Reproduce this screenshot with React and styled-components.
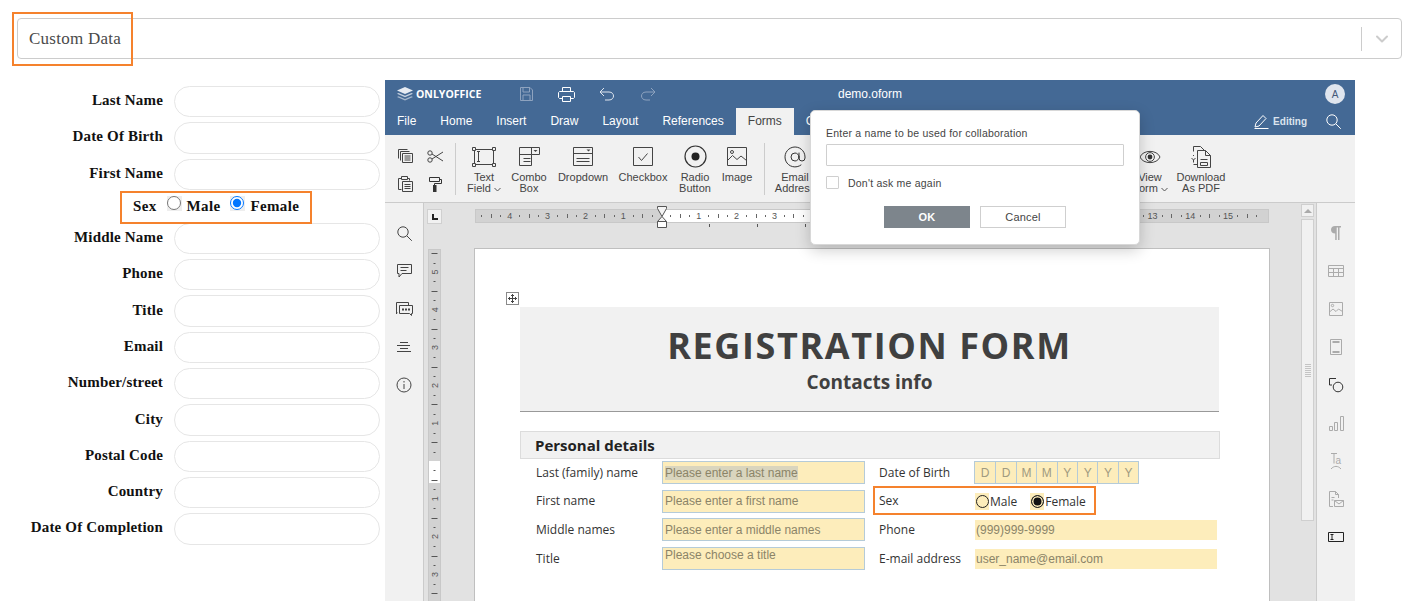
import React from "react";
import styled, { createGlobalStyle } from "styled-components";
import { ChevronDown, AtSign } from "lucide-react";

const GlobalStyle = createGlobalStyle`
  html, body { margin: 0; padding: 0; background: #fff; overflow: hidden; }
  * { box-sizing: border-box; }
`;

const Page = styled.div`
  position: relative;
  width: 1420px;
  height: 601px;
  overflow: hidden;
  padding: 18px 18px 0 17px;
  font-family: "Liberation Serif", serif;
`;

const Callout = styled.div`
  position: absolute;
  border: 2px solid #f5822d;
  pointer-events: none;
  left: ${(p) => p.$x}px;
  top: ${(p) => p.$y}px;
  width: ${(p) => p.$w}px;
  height: ${(p) => p.$h}px;
  z-index: 5;
`;

const SelectBar = styled.div`
  height: 41px;
  border: 1px solid #ccc;
  border-radius: 4px;
  display: flex;
  align-items: center;
  justify-content: space-between;
  padding: 0 9px 0 11px;
`;

const SelectValue = styled.span`
  position: relative;
  font-size: 17px;
  letter-spacing: 0.25px;
  color: #4a4a4a;
  &::before {
    content: "";
    position: absolute;
    left: 0;
    top: 0;
    width: 3px;
    height: 20px;
    background: #eee;
    z-index: -1;
  }
`;

const SelectArrow = styled.div`
  display: flex;
  align-items: center;
  height: 24px;
  padding-left: 10px;
  border-left: 1px solid #ccc;
  color: #ccc;
`;

const Main = styled.div`
  display: flex;
  margin-top: 21px;
`;

const FormColumn = styled.div`
  width: 363px;
  margin-right: 5px;
  padding-top: 6px;
  display: flex;
  flex-direction: column;
  gap: 5px;
`;

const FormRow = styled.div`
  display: flex;
  align-items: center;
  gap: 11px;
`;

const FieldLabel = styled.label`
  width: 146px;
  padding-bottom: 2px;
  text-align: right;
  font-size: 15px;
  font-weight: 700;
  letter-spacing: 0.17px;
  color: #111;
`;

const FieldInput = styled.input`
  width: 206px;
  height: 31.3px;
  border: 1px solid #e6e6e6;
  border-radius: 16px;
  background: #fff;
`;

const SexRow = styled.div`
  height: 23px;
  padding-left: 116px;
  display: flex;
  align-items: center;
  font-size: 15px;
  font-weight: 700;
  letter-spacing: 0.35px;
  color: #111;
`;

const SexLabel = styled.span`
  margin-right: 10px;
`;

const RadioOption = styled.label`
  display: flex;
  align-items: center;
  margin-right: 10px;
`;

const RadioBack = styled.span`
  display: flex;
  width: 15px;
  height: 15px;
  margin: 0 5px 5px 0;
  background: #eee;
  input {
    width: 14px;
    height: 14px;
    margin: 0;
    accent-color: #0075ff;
  }
`;

const Editor = styled.div`
  position: relative;
  width: 970px;
  height: 522px;
  display: flex;
  flex-direction: column;
  overflow: hidden;
  font-family: "Liberation Sans", sans-serif;
`;

const TitleBar = styled.div`
  height: 28px;
  background: #446995;
  color: #fff;
  display: flex;
  align-items: center;
  padding: 0 10px 0 12px;
  position: relative;
`;

const Logo = styled.div`
  display: flex;
  align-items: center;
  gap: 3px;
  width: 123px;
  font-family: "Open Sans", sans-serif;
  font-size: 10.5px;
  font-weight: 700;
`;

const QuickActions = styled.div`
  display: flex;
  align-items: center;
  gap: 24.5px;
`;

const DocName = styled.div`
  position: absolute;
  left: 453px;
  top: 7px;
  font-size: 12px;
`;

const Avatar = styled.div`
  margin-left: auto;
  width: 20px;
  height: 20px;
  border-radius: 50%;
  background: #dfe5ee;
  color: #44597a;
  font-size: 10px;
  display: flex;
  align-items: center;
  justify-content: center;
`;

const TabBar = styled.div`
  height: 27px;
  background: #446995;
  display: flex;
  align-items: flex-end;
  position: relative;
`;

const Tab = styled.div`
  height: 27px;
  padding: 0 12px 2px;
  display: flex;
  align-items: center;
  font-size: 12px;
  color: ${(p) => (p.$active ? "#444" : "#fff")};
  background: ${(p) => (p.$active ? "#f1f1f1" : "transparent")};
`;

const TabTools = styled.div`
  margin-left: auto;
  height: 27px;
  display: flex;
  align-items: center;
  gap: 19px;
  padding-right: 14px;
  color: #fff;
  font-size: 10px;
  font-weight: 700;
`;

const EditingMode = styled.div`
  display: flex;
  align-items: center;
  gap: 4px;
  color: #dbe3ee;
`;

const Toolbar = styled.div`
  height: 68px;
  background: #f1f1f1;
  border-bottom: 1px solid #cbcbcb;
  display: flex;
  padding: 7px 0 0 9px;
  color: #444;
`;

const ClipGrid = styled.div`
  display: grid;
  grid-template-columns: 22px 22px;
  grid-auto-rows: 28px;
  column-gap: 8px;
  align-items: center;
  justify-items: center;
  width: 61px;
`;

const Separator = styled.div`
  width: 1px;
  height: 52px;
  margin-top: 1px;
  margin-left: ${(p) => p.$left || 0}px;
  background: #ccc;
`;

const ToolGroup = styled.div`
  display: flex;
  padding-left: ${(p) => p.$pad || 0}px;
  margin-right: ${(p) => p.$end || 0}px;
`;

const ToolButton = styled.div`
  width: ${(p) => p.$w}px;
  display: flex;
  flex-direction: column;
  align-items: center;
  font-size: 11px;
  line-height: 11px;
  text-align: center;
  color: #444;
  white-space: nowrap;
`;

const ToolIcon = styled.div`
  height: 29px;
  margin-bottom: 1px;
  display: flex;
  align-items: center;
  justify-content: center;
`;

const CaretSvg = styled.svg`
  margin-left: 3px;
`;

const Workspace = styled.div`
  flex: 1;
  min-height: 0;
  display: flex;
`;

const Rail = styled.div`
  width: 39px;
  flex: none;
  background: #f1f1f1;
  display: flex;
  flex-direction: column;
  align-items: center;
  border-${(p) => p.$side}: 1px solid #cbcbcb;
  padding-top: 11px;
`;

const RailSlot = styled.div`
  height: 38px;
  display: flex;
  align-items: center;
  justify-content: center;
`;

const Canvas = styled.div`
  flex: 1;
  min-width: 0;
  background: #e2e2e2;
  overflow: hidden;
  display: grid;
  grid-template-columns: 50px 1fr;
  grid-template-rows: 45px 1fr;
`;

const Corner = styled.div`
  margin: 6px 0 0 3px;
  width: 15px;
  height: 15px;
  background: #f1f1f1;
  border: 1px solid #d0d0d0;
  display: flex;
  align-items: center;
  justify-content: center;
`;

const CornerMark = styled.span`
  width: 6px;
  height: 6px;
  border-left: 2px solid #222;
  border-bottom: 2px solid #222;
`;

const HRuler = styled.div`
  padding: 6px 0 0 1px;
`;

const HRulerSvg = styled.svg`
  overflow: visible;
`;

const VRuler = styled.div`
  padding: 1px 0 0 4px;
`;

const DocPage = styled.div`
  width: 796px;
  background: #fff;
  border: 1px solid #bfbfbf;
  border-bottom: none;
  padding: 58px 50px 0 45px;
  color: #333;
  position: relative;
  font-family: "Open Sans", sans-serif;
`;

const MoveHandle = styled.div`
  position: absolute;
  left: 31px;
  top: 43px;
  width: 13px;
  height: 13px;
  border: 1px solid #8a8a8a;
  background: #fff;
  display: flex;
  align-items: center;
  justify-content: center;
`;

const Banner = styled.div`
  height: 105px;
  background: #f1f1f1;
  border-bottom: 1px solid #999;
  display: flex;
  flex-direction: column;
  align-items: center;
  padding-top: 14px;
`;

const BannerTitle = styled.div`
  font-size: 36px;
  line-height: 49px;
  font-weight: 700;
  letter-spacing: 1.6px;
  color: #404040;
`;

const BannerSub = styled.div`
  font-size: 19px;
  line-height: 24px;
  font-weight: 700;
  color: #404040;
`;

const SectionHead = styled.div`
  margin: 19px -1px 0 0;
  height: 27.5px;
  background: #f1f1f1;
  border: 1px solid #dcdcdc;
  padding-left: 14px;
  display: flex;
  align-items: center;
  font-size: 15px;
  font-weight: 700;
  color: #222;
`;

const DetailGrid = styled.div`
  display: grid;
  grid-template-columns: 126px 203px 109px auto;
  grid-auto-rows: 28.6px;
  padding-left: 16px;
  align-items: center;
  font-size: 12px;
  color: #333;
`;

const DetailLabel = styled.div`
  padding-left: ${(p) => p.$pad || 0}px;
  padding-bottom: 1px;
  white-space: nowrap;
`;

const FillField = styled.div`
  height: 23px;
  width: 203px;
  background: #fdedbb;
  border: ${(p) => (p.$plain ? "none" : "1px solid #b5cbd8")};
  padding: 0 2px;
  display: flex;
  align-items: ${(p) => (p.$top ? "flex-start" : "center")};
  font-family: "Liberation Sans", sans-serif;
  font-size: 12px;
  line-height: 14px;
  color: #8b8468;
  white-space: nowrap;
`;

const PlainField = styled(FillField)`
  height: 20px;
  padding-left: 1px;
  margin-left: 1px;
  width: 242px;
`;

const Selected = styled.span`
  background: #d9d5be;
`;

const CombGrid = styled.div`
  display: flex;
  height: 23px;
  width: max-content;
  border: 1px solid #b5cbd8;
  background: #fdedbb;
`;

const CombCell = styled.div`
  width: 20.4px;
  display: flex;
  align-items: center;
  justify-content: center;
  border-left: ${(p) => (p.$first ? "none" : "1px solid #b5cbd8")};
  font-family: "Liberation Sans", sans-serif;
  font-size: 12px;
  color: #a09a80;
`;

const DocRadios = styled.div`
  display: flex;
  align-items: center;
  gap: 13px;
  margin-left: 1px;
`;

const DocRadio = styled.div`
  display: flex;
  align-items: center;
  gap: 1px;
`;

const RadioMark = styled.span`
  width: 14px;
  height: 17px;
  background: #fdedbb;
  display: flex;
  align-items: center;
  justify-content: center;
  &::before {
    content: "";
    width: 11px;
    height: 11px;
    border-radius: 50%;
    border: 1px solid #222;
    background: ${(p) => (p.$on ? "#111" : "transparent")};
    box-shadow: ${(p) => (p.$on ? "inset 0 0 0 1.5px #fdedbb" : "none")};
  }
`;

const Scrollbar = styled.div`
  width: 17px;
  flex: none;
  background: #e2e2e2;
  padding: 1px 2px 0 2px;
  display: flex;
  flex-direction: column;
  gap: 2px;
`;

const ScrollButton = styled.div`
  height: 13px;
  background: #f1f1f1;
  border: 1px solid #cfcfcf;
  display: flex;
  align-items: center;
  justify-content: center;
  &::before {
    content: "";
    border-left: 4px solid transparent;
    border-right: 4px solid transparent;
    border-bottom: 4px solid #aaa;
  }
`;

const ScrollThumb = styled.div`
  height: 302px;
  background: #f1f1f1;
  border: 1px solid #cfcfcf;
  display: flex;
  align-items: center;
  justify-content: center;
`;

const ThumbGrip = styled.span`
  width: 6px;
  height: 13px;
  background: repeating-linear-gradient(#c4c4c4 0 1px, transparent 1px 2px);
`;

const Dialog = styled.div`
  position: absolute;
  left: 425px;
  top: 30px;
  width: 330px;
  height: 135px;
  background: #fff;
  border: 1px solid #d8d8d8;
  border-radius: 5px;
  box-shadow: 0 5px 15px rgba(0, 0, 0, 0.2);
  padding: 16px 15px 0 15px;
  font-size: 10.5px;
  letter-spacing: 0.22px;
  color: #444;
`;

const DialogInput = styled.div`
  height: 22px;
  margin-top: 5px;
  border: 1px solid #cfcfcf;
  border-radius: 1px;
`;

const CheckRow = styled.div`
  display: flex;
  align-items: center;
  gap: 9px;
  margin-top: 10px;
`;

const CheckBox = styled.span`
  width: 13px;
  height: 13px;
  border: 1px solid #cfcfcf;
  border-radius: 1px;
`;

const DialogActions = styled.div`
  display: flex;
  justify-content: center;
  gap: 10px;
  margin-top: 17px;
`;

const DialogButton = styled.div`
  width: 86px;
  height: 22px;
  display: flex;
  align-items: center;
  justify-content: center;
  font-size: 11px;
  font-weight: ${(p) => (p.$primary ? 700 : 400)};
  background: ${(p) => (p.$primary ? "#7d858c" : "#fff")};
  color: ${(p) => (p.$primary ? "#fff" : "#444")};
  border: ${(p) => (p.$primary ? "none" : "1px solid #cfcfcf")};
`;

const Stroke = ({ w = 20, h = 20, color = "#444", children }) => (
  <svg width={w} height={h} viewBox={`0 0 ${w} ${h}`} fill="none" stroke={color} strokeWidth={1}>
    {children}
  </svg>
);

const CopyIcon = () => (
  <Stroke w={15} h={14}>
    <path d="M.5 9.500V.5h9M2.500 11.500V2.500h9M4.500 4.500h10v9h-10zM6.500 7h6M6.500 9h6M6.500 11h6" />
  </Stroke>
);
const PasteIcon = () => (
  <Stroke w={15} h={16}>
    <path d="M3.500 2.500h-3v11h3M3.500 .5h6v3h-6zM9.500 2.500h2v2M4.500 5.500h10v10h-10zM6.500 8.500h6M6.500 10.500h6M6.500 12.500h6" />
  </Stroke>
);
const ScissorsIcon = () => (
  <Stroke w={16} h={13}>
    <circle cx="3" cy="3" r="2.200" />
    <circle cx="3" cy="10" r="2.200" />
    <path d="M5 4 16 11M5 9 16 2" />
  </Stroke>
);
const PainterIcon = () => (
  <svg width="13" height="15" viewBox="0 0 13 15" fill="none" stroke="#333">
    <path d="M.5.5h10v4H.5zM10.500 2.500h2v4H5.500v2" />
    <rect x="4" y="8" width="3.500" height="7" fill="#333" stroke="none" />
  </svg>
);
const TextFieldIcon = () => (
  <Stroke w={24} h={20}>
    <path d="M2.500 2.500h19v15h-19z" />
    <path d="M.5.5h3v3h-3zM20.500.5h3v3h-3zM.5 16.500h3v3h-3zM20.500 16.500h3v3h-3z" fill="#f1f1f1" />
    <path d="M5 4.500h3M6.500 4.500v10M5 14.500h3" />
  </Stroke>
);
const ComboIcon = () => (
  <Stroke w={21} h={19}>
    <path d="M.5.500h20v7h-8v11H.5zM.5 7.500h12V.5M4.500 11.500h7M4.500 14.500h7" />
    <path d="M14.500 3h4l-2 2z" fill="#444" stroke="none" />
  </Stroke>
);
const DropdownIcon = () => (
  <Stroke w={20} h={19}>
    <path d="M.5.500h19v18H.5zM.5 6.500h19M3.500 11.500h13M3.500 14.500h13" />
    <path d="M13.500 2.500h4l-2 2z" fill="#444" stroke="none" />
  </Stroke>
);
const CheckboxIcon = () => (
  <Stroke w={20} h={19}>
    <path d="M.5.500h19v18H.5zM5.500 10l3 3.500 6-7" />
  </Stroke>
);
const RadioIcon = () => (
  <svg width="23" height="23" viewBox="0 0 23 23" fill="none" stroke="#333" strokeWidth="1.200">
    <circle cx="11.500" cy="11.500" r="10.500" />
    <circle cx="11.500" cy="11.500" r="4" fill="#222" stroke="none" />
  </svg>
);
const ImageIcon = () => (
  <Stroke w={20} h={19}>
    <path d="M.5.500h19v18H.5zM.5 13.500l5-5 4.500 4 4-3.500 5.500 4.500" />
    <circle cx="5" cy="5" r="1.500" />
  </Stroke>
);
const EyeIcon = () => (
  <Stroke w={22} h={14}>
    <path d="M1 7c3-7.500 17-7.500 20 0-3 7.500-17 7.500-20 0z" />
    <circle cx="11" cy="7" r="4.400" />
    <circle cx="11" cy="7" r="2.400" fill="#333" stroke="none" />
  </Stroke>
);
const PdfIcon = () => (
  <Stroke w={22} h={23}>
    <path d="M3.500 6.500v-5h7l4 4M3.500 11v-1M1.500 13l2 2 2-2M3.500 15v2.500M3.500 19.500h4" />
    <path d="M7.500 5.500h8l5 5v12h-13zM15.500 5.500v5h5" fill="#f1f1f1" />
    <path d="M10.500 14.500h7M10.500 17.500h7v3h-7z" />
  </Stroke>
);
const Caret = () => (
  <CaretSvg width="7" height="5" viewBox="0 0 7 5" fill="none" stroke="#555">
    <path d="M.5 1l3 3 3-3" />
  </CaretSvg>
);

const SearchIcon = ({ color = "#444" }) => (
  <Stroke w={15} h={15} color={color}>
    <circle cx="6" cy="6" r="5.200" />
    <path d="M9.800 9.800l5 5" />
  </Stroke>
);
const RailComment = () => (
  <Stroke w={15} h={14}>
    <path d="M.5.500h14v9H5l-3 3.500V9.500H.5zM3.500 3.500h8M3.500 6.500h6" />
  </Stroke>
);
const RailChat = () => (
  <Stroke w={17} h={14}>
    <path d="M1 10l-.5 2V.5h12V3" />
    <path d="M3.500 3.500h13v8h-1v2l-2-2h-10z" />
    <path d="M6 7.500h2M9 7.500h2M12 7.500h2" strokeWidth="2" />
  </Stroke>
);
const RailAlign = () => (
  <Stroke w={14} h={10}>
    <path d="M3 .5h8M0 3.500h13M3 6.500h8M0 9.500h14" />
  </Stroke>
);
const RailInfo = () => (
  <Stroke w={16} h={16}>
    <circle cx="8" cy="8" r="7" />
    <path d="M8 7v5M8 4v1.500" />
  </Stroke>
);

const SideParagraph = () => (
  <svg width="10" height="14" viewBox="0 0 10 14" fill="#ababab">
    <path d="M4 0h6v1.500H8.500V14H7V1.500H5.700V14H4.200V7.500C1.500 7.500 0 6 0 3.800 0 1.500 1.500 0 4 0z" />
  </svg>
);
const SideTable = () => (
  <Stroke w={16} h={12} color="#ababab">
    <path d="M.5.500h15v11H.5zM.5 3.500h15M.5 7.500h15M5.500 3.500v8M10.500 3.500v8" />
  </Stroke>
);
const SideImage = () => (
  <Stroke w={14} h={14} color="#ababab">
    <path d="M.5.500h13v13H.5zM.5 10l3.500-3 3 2.500 2.500-2.500 4 2.500" />
    <circle cx="3.500" cy="3.500" r="1.200" />
  </Stroke>
);
const SideHeader = () => (
  <Stroke w={12} h={16} color="#ababab">
    <path d="M.5.500h11v15H.5z" />
    <path d="M2.500 3h7M2.500 13h7" strokeWidth="2" />
  </Stroke>
);
const SideShape = () => (
  <Stroke w={15} h={15} color="#333">
    <path d="M7 .5H.5V7H3" />
    <circle cx="9" cy="9" r="4.800" />
  </Stroke>
);
const SideChart = () => (
  <Stroke w={15} h={15} color="#ababab">
    <path d="M.5 10.500h3v4h-3zM5.500 6.500h3v8h-3zM11.500.5h3v14h-3z" />
  </Stroke>
);
const SideArt = () => (
  <svg width="12" height="17" viewBox="0 0 12 17" fill="none" stroke="#ababab">
    <path d="M1 .5h6M4 .5v10" />
    <text x="5.500" y="10.500" fontFamily="Liberation Sans" fontSize="10" fill="#ababab" stroke="none">a</text>
    <path d="M1 16c3-3.500 7-3.500 10 0" />
  </svg>
);
const SideMail = () => (
  <Stroke w={15} h={16} color="#ababab">
    <path d="M4 15.500H.5V.5h6l3 3V7M6.500.5v3h3M2.500 6.500h3M2.500 9h2" />
    <path d="M5.500 9.500h9v6h-9zM5.500 9.500l4.500 3.500 4.500-3.500" />
  </Stroke>
);
const SideForm = () => (
  <Stroke w={16} h={10} color="#222">
    <path d="M.5.500h15v9H.5zM2.500 2.500h3M4 2.500v5M2.500 7.500h3" />
  </Stroke>
);

// ruler: one unit is a centimetre on the page, 37.8px
const RULER_UNIT = 37.8;

const HRulerArt = () => {
  const zero = 186;
  const items = [];
  for (let i = -5; i <= 21; i++) {
    const x = zero + i * RULER_UNIT;
    // the numbers between 335 and 665 lie behind the dialog
    if (i !== 0 && x > 2 && x < 790 && (x < 335 || x > 665)) {
      items.push(
        <text key={`n${i}`} x={x} y="10" textAnchor="middle" fontSize="9" fontFamily="Liberation Sans" fill="#555">
          {Math.abs(i)}
        </text>
      );
    }
    for (const [k, len] of [[0.25, 2], [0.5, 4], [0.75, 2]]) {
      const tx = Math.round(zero + (i + k) * RULER_UNIT) + 0.5;
      if (tx > 3 && tx < 788) {
        items.push(<path key={`t${i}${k}`} d={`M${tx} ${7 - len / 2}v${len}`} stroke="#666" />);
      }
    }
  }
  return (
    <HRulerSvg width="794" height="36" viewBox="0 0 794 36" fill="none">
      <rect x=".5" y=".5" width="793" height="13" fill="#d2d2d2" stroke="#c8c8c8" />
      <rect x="186" y="1" width="469" height="12" fill="#fff" />
      {items}
      <path d="M234.500 15v3M282.500 15v3M330.500 15v3" stroke="#555" />
      <path d="M182.500-2.500h9v2l-4.500 8-4.500-8zM187 7.500l4.500 5h-9z" fill="#f4f4f4" stroke="#555" />
      <path d="M182.500 12.500h9v6h-9z" fill="#fff" stroke="#555" />
    </HRulerSvg>
  );
};

const VRulerArt = () => {
  const zero = 212;
  const items = [];
  for (let i = -6; i <= 4; i++) {
    const y = zero + i * RULER_UNIT;
    if (i !== 0 && y > 3 && y < 350) {
      items.push(
        <text key={`n${i}`} transform={`translate(9.500 ${y}) rotate(-90)`} textAnchor="middle" fontSize="9" fontFamily="Liberation Sans" fill="#555">
          {Math.abs(i)}
        </text>
      );
    }
    for (const [k, len] of [[0.25, 2], [0.5, 6], [0.75, 2]]) {
      const ty = Math.round(zero + (i + k) * RULER_UNIT) + 0.5;
      if (ty > 3 && ty < 350) {
        items.push(<path key={`t${i}${k}`} d={`M${6.5 - len / 2} ${ty}h${len}`} stroke="#555" />);
      }
    }
  }
  return (
    <svg width="13" height="360" viewBox="0 0 13 360" fill="none">
      <rect x=".5" y=".5" width="12" height="359" fill="#d2d2d2" stroke="#c8c8c8" />
      <rect x="1" y="212" width="11" height="22" fill="#fff" />
      {items}
    </svg>
  );
};

const formFieldsTop = ["Last Name", "Date Of Birth", "First Name"];
const formFieldsBottom = ["Middle Name", "Phone", "Title", "Email", "Number/street", "City", "Postal Code", "Country", "Date Of Completion"];
const tabs = ["File", "Home", "Insert", "Draw", "Layout", "References"];
const combMask = ["D", "D", "M", "M", "Y", "Y", "Y", "Y"];
const leftRail = [SearchIcon, RailComment, RailChat, RailAlign, RailInfo];
const rightRail = [SideParagraph, SideTable, SideImage, SideHeader, SideShape, SideChart, SideArt, SideMail, SideForm];

function FormField({ label }) {
  return (
    <FormRow>
      <FieldLabel>{label}</FieldLabel>
      <FieldInput />
    </FormRow>
  );
}

function Tool({ w, icon, lines, caret }) {
  return (
    <ToolButton $w={w}>
      <ToolIcon>{icon}</ToolIcon>
      {lines.map((line, i) => (
        <span key={line}>
          {line}
          {caret && i === lines.length - 1 && <Caret />}
        </span>
      ))}
    </ToolButton>
  );
}

export default function App() {
  return (
    <Page>
      <GlobalStyle />
      <Callout $x={12} $y={12} $w={121} $h={54} />
      <Callout $x={120} $y={191} $w={192} $h={33} />
      <Callout $x={873} $y={486} $w={223} $h={29} />

      <SelectBar>
        <SelectValue>Custom Data</SelectValue>
        <SelectArrow>
          <ChevronDown size={20} strokeWidth={2.4} />
        </SelectArrow>
      </SelectBar>

      <Main>
        <FormColumn>
          {formFieldsTop.map((f) => (
            <FormField key={f} label={f} />
          ))}
          <SexRow>
            <SexLabel>Sex</SexLabel>
            <RadioOption>
              <RadioBack>
                <input type="radio" name="sex" />
              </RadioBack>
              Male
            </RadioOption>
            <RadioOption>
              <RadioBack>
                <input type="radio" name="sex" defaultChecked />
              </RadioBack>
              Female
            </RadioOption>
          </SexRow>
          {formFieldsBottom.map((f) => (
            <FormField key={f} label={f} />
          ))}
        </FormColumn>

        <Editor>
          <TitleBar>
            <Logo>
              <svg width="16" height="14" viewBox="0 0 16 14" fill="#e6ebf2">
                <path d="M8 0l8 3.500-8 3.500-8-3.500z" />
                <path d="M1.500 6L8 8.800 14.500 6 16 6.800 8 10.300 0 6.800z" opacity=".8" />
                <path d="M1.500 9.300L8 12.100l6.500-2.800 1.500.8L8 13.600 0 10.100z" opacity=".6" />
              </svg>
              ONLYOFFICE
            </Logo>
            <QuickActions>
              <Stroke w={13} h={14} color="#8ea3bf">
                <path d="M.5.500h9.500l2.500 2.500v10.500H.5zM3 .5v4.500h6.500V.5M3 13.500V8h7v5.500" />
              </Stroke>
              <Stroke w={17} h={15} color="#fff">
                <path d="M4.500 4.500V.5h8v4M4.500 11.500h-3l-1-1v-5l1-1h14l1 1v5l-1 1h-3M4.500 9.500h8v5h-8z" />
              </Stroke>
              <Stroke w={16} h={14} color="#dfe6ef">
                <path d="M5 1L1 5l4 4M1 5h9c6 0 6 8 0 8H6" />
              </Stroke>
              <Stroke w={16} h={14} color="#8ea3bf">
                <path d="M11 1l4 4-4 4M15 5H6c-6 0-6 8 0 8h4" />
              </Stroke>
            </QuickActions>
            <DocName>demo.oform</DocName>
            <Avatar>A</Avatar>
          </TitleBar>

          <TabBar>
            {tabs.map((t) => (
              <Tab key={t}>{t}</Tab>
            ))}
            <Tab $active>Forms</Tab>
            <Tab>Collaboration</Tab>
            <TabTools>
              <EditingMode>
                <Stroke w={15} h={14} color="#fff">
                  <path d="M1 12l1-4 7-7.500 3 3L5 11zM.5 13.500h14" />
                </Stroke>
                Editing
              </EditingMode>
              <SearchIcon color="#fff" />
            </TabTools>
          </TabBar>

          <Toolbar>
            <ClipGrid>
              <CopyIcon />
              <ScissorsIcon />
              <PasteIcon />
              <PainterIcon />
            </ClipGrid>
            <Separator />
            <ToolGroup $pad={5}>
              <Tool w={46} icon={<TextFieldIcon />} lines={["Text", "Field"]} caret />
              <Tool w={44} icon={<ComboIcon />} lines={["Combo", "Box"]} />
              <Tool w={64} icon={<DropdownIcon />} lines={["Dropdown"]} />
              <Tool w={56} icon={<CheckboxIcon />} lines={["Checkbox"]} />
              <Tool w={48} icon={<RadioIcon />} lines={["Radio", "Button"]} />
              <Tool w={36} icon={<ImageIcon />} lines={["Image"]} />
            </ToolGroup>
            <Separator $left={9} />
            <ToolGroup $pad={2} $end={303}>
              <Tool w={56} icon={<AtSign size={24} strokeWidth={1} color="#333" />} lines={["Email", "Address"]} />
            </ToolGroup>
            <ToolGroup>
              <Tool w={48} icon={<EyeIcon />} lines={["View", "Form"]} caret />
              <Tool w={54} icon={<PdfIcon />} lines={["Download", "As PDF"]} />
            </ToolGroup>
          </Toolbar>

          <Workspace>
            <Rail $side="right">
              {leftRail.map((Icon, i) => (
                <RailSlot key={i}>
                  <Icon />
                </RailSlot>
              ))}
            </Rail>
            <Canvas>
              <Corner>
                <CornerMark />
              </Corner>
              <HRuler>
                <HRulerArt />
              </HRuler>
              <VRuler>
                <VRulerArt />
              </VRuler>
              <DocPage>
                <MoveHandle>
                  <svg width="9" height="9" viewBox="0 0 9 9" fill="none" stroke="#444">
                    <path d="M4.500 0v9M0 4.500h9M3 1.500h3M3 7.500h3M1.500 3v3M7.500 3v3" />
                  </svg>
                </MoveHandle>
                <Banner>
                  <BannerTitle>REGISTRATION FORM</BannerTitle>
                  <BannerSub>Contacts info</BannerSub>
                </Banner>
                <SectionHead>Personal details</SectionHead>
                <DetailGrid>
                  <DetailLabel>Last (family) name</DetailLabel>
                  <FillField>
                    <Selected>Please enter a last name</Selected>
                  </FillField>
                  <DetailLabel $pad={14}>Date of Birth</DetailLabel>
                  <CombGrid>
                    {combMask.map((c, i) => (
                      <CombCell key={i} $first={i === 0}>
                        {c}
                      </CombCell>
                    ))}
                  </CombGrid>

                  <DetailLabel>First name</DetailLabel>
                  <FillField>Please enter a first name</FillField>
                  <DetailLabel $pad={14}>Sex</DetailLabel>
                  <DocRadios>
                    <DocRadio>
                      <RadioMark />
                      Male
                    </DocRadio>
                    <DocRadio>
                      <RadioMark $on />
                      Female
                    </DocRadio>
                  </DocRadios>

                  <DetailLabel>Middle names</DetailLabel>
                  <FillField>Please enter a middle names</FillField>
                  <DetailLabel $pad={14}>Phone</DetailLabel>
                  <PlainField $plain>(999)999-9999</PlainField>

                  <DetailLabel>Title</DetailLabel>
                  <FillField $top>Please choose a title</FillField>
                  <DetailLabel $pad={14}>E-mail address</DetailLabel>
                  <PlainField $plain>user_name@email.com</PlainField>
                </DetailGrid>
              </DocPage>
            </Canvas>
            <Scrollbar>
              <ScrollButton />
              <ScrollThumb>
                <ThumbGrip />
              </ScrollThumb>
            </Scrollbar>
            <Rail $side="left">
              {rightRail.map((Icon, i) => (
                <RailSlot key={i}>
                  <Icon />
                </RailSlot>
              ))}
            </Rail>
          </Workspace>

          <Dialog>
            Enter a name to be used for collaboration
            <DialogInput />
            <CheckRow>
              <CheckBox />
              Don't ask me again
            </CheckRow>
            <DialogActions>
              <DialogButton $primary>OK</DialogButton>
              <DialogButton>Cancel</DialogButton>
            </DialogActions>
          </Dialog>
        </Editor>
      </Main>
    </Page>
  );
}
